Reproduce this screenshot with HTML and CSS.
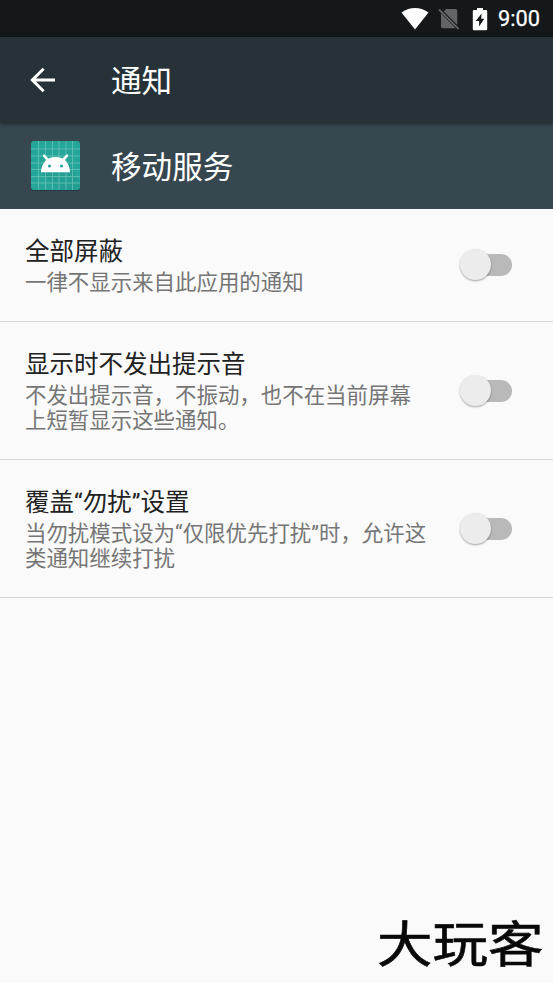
FILE: index.html
```html
<!DOCTYPE html>
<html lang="zh-CN">
<head>
<meta charset="utf-8">
<title>通知</title>
<link rel="stylesheet" href="styles.css">
</head>
<body>
<div class="status">
  <svg class="wifi" width="28" height="22" viewBox="0 0 28 22"><path d="M0.5 4.4Q14-4.4 27.5 4.4L14 21.5Z" fill="#fff"/></svg>
  <svg class="sim" width="22" height="24" viewBox="0 0 22 24"><path d="M8 2H17.5Q19.3 2 19.3 4V18L5.8 4.4ZM3 6.3 17.7 21.2H5Q3 21.2 3 19.5Z" fill="#626466"/><path d="M1 2.5 20.7 22.2" stroke="#626466" stroke-width="1.8"/></svg>
  <svg class="battery" width="16" height="24" viewBox="0 0 16 24"><path fill="#fff" fill-rule="evenodd" d="M5 1H11V3H14Q15.2 3 15.2 4.3V22Q15.2 23.3 14 23.3H2Q.8 23.3.8 22V4.3Q.8 3 2 3H5ZM9.6 6.6 3.7 14H7.1V19.6L12.3 11.8H9.2Z"/></svg>
  <span class="clock">9:00</span>
</div>
<header class="bar">
  <svg class="back" width="26" height="26" viewBox="0 0 26 26" fill="none" stroke="#fff" stroke-width="3"><path d="M25 13H3M13.6 1.8 2.4 13 13.6 24.2"/></svg>
  <h1>通知</h1>
</header>
<section class="app">
  <svg class="appicon" width="51" height="52" viewBox="0 0 51 52">
    <rect x="1" y="2" width="49" height="49" rx="3" fill="#202f35" opacity=".6"/>
    <rect x="1" y="1" width="49" height="49" rx="3" fill="#26a69a"/>
    <path d="M11 32 29 50H47Q50 50 50 47V42L36 20Z" fill="#1f8f84" opacity=".35"/>
    <path d="M8.5 1V50M15.5 1V50M22.5 1V50M29 1V50M36 1V50M42.5 1V50M1 9H50M1 16H50M1 23H50M1 29.5H50M1 36.5H50M1 43H50" stroke="#67c1b8" stroke-width=".8" fill="none"/>
    <path d="M11 32.2C11.4 22.5 17 17 25.5 17S39.7 22.5 40 32.2Z" fill="#fff"/>
    <path d="M14 15.6 18.4 20.4M37 15.6 32.6 20.4" stroke="#fff" stroke-width="2.4" stroke-linecap="round"/>
    <circle cx="19.5" cy="26" r="1.6" fill="#26a69a"/><circle cx="31.5" cy="26" r="1.6" fill="#26a69a"/>
  </svg>
  <h2>移动服务</h2>
</section>
<main>
  <div class="row first">
    <div class="text"><h3>全部屏蔽</h3><p>一律不显示来自此应用的通知</p></div>
    <div class="switch"><i class="thumb"></i></div>
  </div>
  <div class="row">
    <div class="text"><h3>显示时不发出提示音</h3><p>不发出提示音，不振动，也不在当前屏幕<br>上短暂显示这些通知。</p></div>
    <div class="switch"><i class="thumb"></i></div>
  </div>
  <div class="row">
    <div class="text"><h3>覆盖“勿扰”设置</h3><p>当勿扰模式设为“仅限优先打扰”时，允许这<br>类通知继续打扰</p></div>
    <div class="switch"><i class="thumb"></i></div>
  </div>
</main>
<div class="watermark">大玩客</div>
</body>
</html>
```
FILE: styles.css
```css
* { box-sizing: border-box; }
body {
  margin: 0;
  width: 553px;
  height: 983px;
  overflow: hidden;
  position: relative;
  background: #fafafa;
  font-family: Roboto, "Noto Sans CJK SC", sans-serif;
  text-spacing-trim: space-all;
}
h1, h2, h3, p { margin: 0; font-weight: 400; white-space: nowrap; }
svg { display: block; flex: none; }
.status {
  height: 37px;
  background: #14181b;
  display: flex;
  align-items: center;
  justify-content: flex-end;
  padding-right: 12px;
}
.wifi { margin: 0 9px 0 0; }
.sim { margin: 0 12px 0 0; }
.battery { margin: 0 10px 0 0; }
.clock { color: #fff; font-size: 21.8px; font-weight: 400; -webkit-text-stroke: .25px #fff; line-height: 37px; width: 43px; white-space: nowrap; }
.bar {
  height: 86px;
  background: #263238;
  display: flex;
  align-items: center;
  padding-left: 30px;
  position: relative;
  box-shadow: 0 1px 4px rgba(0, 0, 0, .45);
}
.bar h1 { margin-left: 55px; }
.app {
  height: 86px;
  background: #37474f;
  display: flex;
  align-items: center;
  padding-left: 30px;
}
.app h2 { margin-left: 30px; }
.bar h1, .app h2 { color: #fff; font-size: 30.6px; line-height: 40px; padding-top: 3px; }
.row {
  height: 138px;
  display: flex;
  align-items: center;
  justify-content: space-between;
  padding: 0 41px 0 25px;
  border-bottom: 1px solid #d4d4d4;
}
.row.first { height: 113px; }
.text { padding-top: 1px; }
.row h3 { color: #212121; font-size: 24.5px; line-height: 32px; }
.row p { color: #757575; font-size: 21.45px; line-height: 25px; padding-top: 2px; }
.switch {
  width: 48px;
  height: 22px;
  flex: none;
  border-radius: 11px;
  background: #b9b9b9;
  position: relative;
}
.thumb {
  position: absolute;
  left: -4px;
  top: -5px;
  width: 31px;
  height: 31px;
  border-radius: 50%;
  background: #ececec;
  box-shadow: 0 1px 2px rgba(0, 0, 0, .35);
}
.watermark {
  position: absolute;
  left: 377px;
  top: 911px;
  font: 400 55.5px/60px "Noto Sans CJK SC", sans-serif;
  -webkit-text-stroke: .7px #080808;
  color: #080808;
  white-space: nowrap;
  transform: scaleY(.88);
}
```
